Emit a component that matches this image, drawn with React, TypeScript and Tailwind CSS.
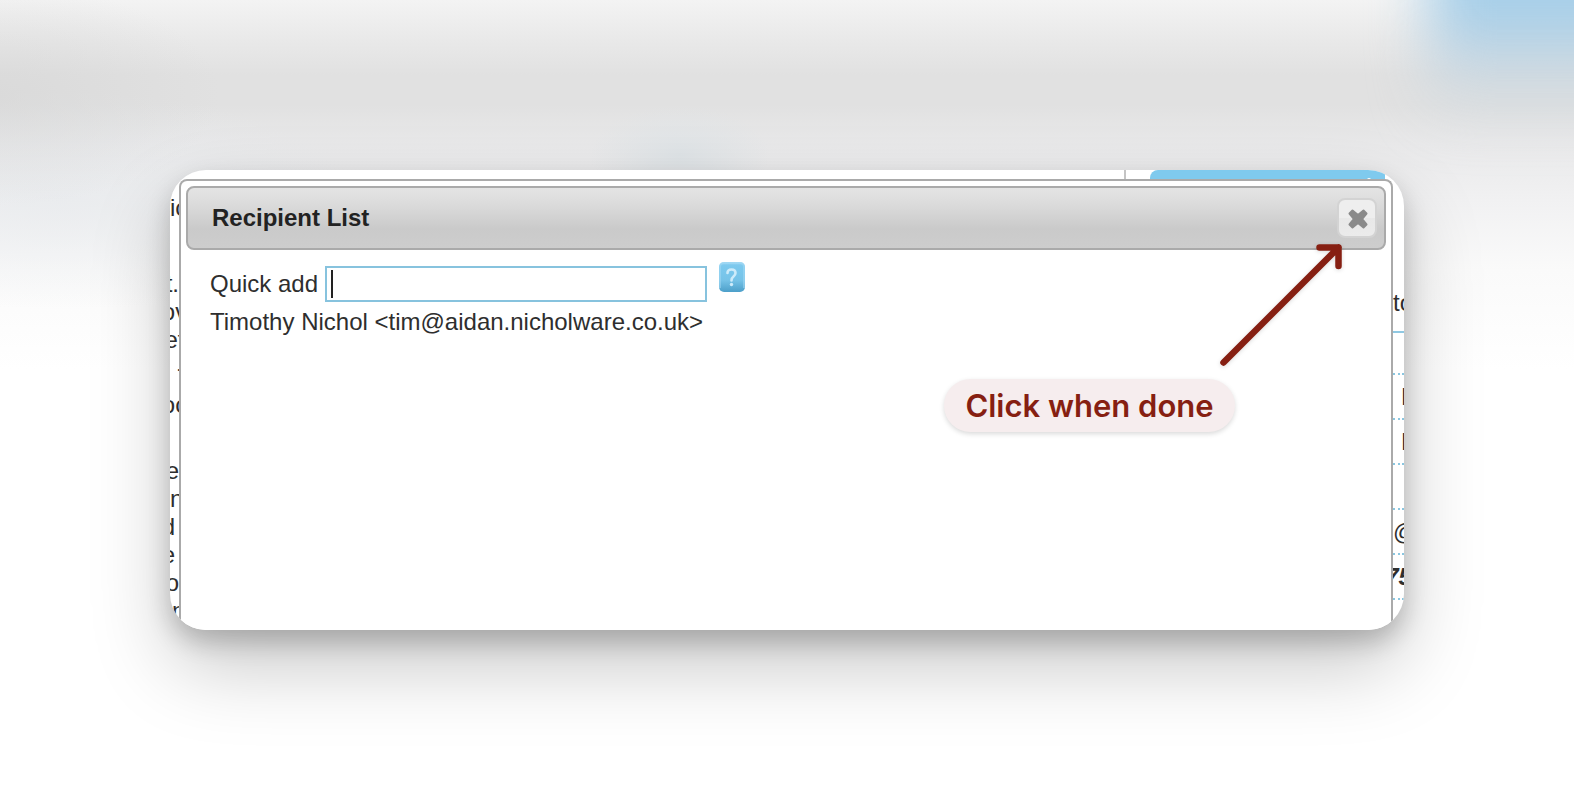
import { useState } from 'react'
import clsx from 'clsx'

type Line = { text: string; gap: string; align: string; bold?: boolean }

// slivers of the page that stay visible left of the dialog
const leftLines: Line[] = [
  { text: 'ic', gap: 'mt-[15px]', align: 'justify-start' },
  { text: 't.', gap: 'mt-12', align: 'justify-end' },
  { text: 'ov', gap: 'mt-0', align: 'justify-center' },
  { text: 'et', gap: 'mt-0', align: 'justify-center' },
  { text: '-', gap: 'mt-0', align: 'justify-start pl-[7px]' },
  { text: 'oc', gap: 'mt-[9px]', align: 'justify-center' },
  { text: 'e', gap: 'mt-[38px]', align: 'justify-end' },
  { text: 'n', gap: 'mt-0', align: 'justify-start' },
  { text: 'd', gap: 'mt-0', align: 'justify-end pr-1' },
  { text: 'e', gap: 'mt-0', align: 'justify-end pr-1' },
  { text: 'o', gap: 'mt-0', align: 'justify-end' },
  { text: 'n', gap: 'mt-0', align: 'justify-start pl-0.5' },
]

const rightRows: Line[] = [
  { text: '', gap: 'h-[42px]', align: 'justify-start' },
  { text: 'H', gap: 'h-[45px]', align: 'justify-start pl-2' },
  { text: 'H', gap: 'h-[45px]', align: 'justify-start pl-2' },
  { text: '', gap: 'h-[45px]', align: 'justify-start' },
  { text: '@', gap: 'h-[45px]', align: 'justify-start' },
  { text: '75', gap: 'h-[45px]', align: 'justify-center', bold: true },
]

const LeftSliver = () => (
  <div className="w-[9px] shrink-0 overflow-hidden" aria-hidden="true">
    {leftLines.map((line, i) => (
      <div key={i} className={clsx('flex leading-7 whitespace-nowrap', line.gap, line.align)}>
        {line.text}
      </div>
    ))}
  </div>
)

const RightSliver = () => (
  <div className="w-[11px] shrink-0 overflow-hidden" aria-hidden="true">
    <div className="mt-[110px] h-11 leading-7 whitespace-nowrap border-b-2 border-[#8fc8e2]">to</div>
    {rightRows.map((row, i) => (
      <div
        key={i}
        className={clsx(
          'flex items-center leading-7 whitespace-nowrap border-b-2 border-dotted border-[#8ac6e0]',
          row.gap,
          row.align,
          row.bold && 'font-bold italic'
        )}
      >
        {row.text}
      </div>
    ))}
  </div>
)

const HelpIcon = () => (
  <svg width="26" height="30" viewBox="0 0 26 30" aria-hidden="true">
    <defs>
      <linearGradient id="help" x1="0" y1="0" x2="0" y2="1">
        <stop offset="0" stopColor="#9bd5f2" />
        <stop offset="0.12" stopColor="#7cc9ee" />
        <stop offset="0.6" stopColor="#76c3e8" />
        <stop offset="1" stopColor="#4c9fc9" />
      </linearGradient>
    </defs>
    <rect width="26" height="30" rx="5" fill="url(#help)" />
    <path d="M1 26 V5 Q1 1 5 1 H21 Q25 1 25 5 V26" fill="none" stroke="#a8dcf5" strokeOpacity="0.5" strokeWidth="2" />
    <path d="M8.5 11 Q8.5 7.5 12.5 7.5 Q16.5 7.5 16.5 11 Q16.5 13 14.5 14.5 Q12.5 16 12.5 18.5" fill="none" stroke="#cdebfa" strokeWidth="2.6" strokeLinecap="round" />
    <circle cx="12.5" cy="22.5" r="1.7" fill="#cdebfa" />
  </svg>
)

const CloseIcon = () => (
  <svg width="22" height="22" viewBox="0 0 22 22" aria-hidden="true">
    <path
      d="M6.5 3.5 L12 8 L17.5 3.5 L20.5 6.5 L16 12 L20.5 17.5 L17.5 20.5 L12 16 L6.5 20.5 L3.5 17.5 L8 12 L3.5 6.5 Z"
      fill="#8a8a8a"
      stroke="#8a8a8a"
      strokeWidth="2"
      strokeLinejoin="round"
    />
  </svg>
)

const Arrow = () => (
  <svg
    className="absolute right-[60px] top-[72px] drop-shadow-sm pointer-events-none"
    width="128"
    height="128"
    viewBox="0 0 128 128"
    fill="none"
    stroke="#861f12"
    strokeWidth="6.5"
    strokeLinecap="round"
    strokeLinejoin="round"
    aria-hidden="true"
  >
    <path d="M7.5 120.5 L122.5 5.5 M103.5 5.5 H122.5 V24" />
  </svg>
)

const Dialog = () => {
  const [query, setQuery] = useState('')

  return (
    <section className="flex-1 min-w-0 bg-white border-2 border-b-0 border-[#aaaaaa] rounded-t-lg p-[5px]">
      <header className="flex items-center justify-between h-16 pl-6 pr-[7px] border-2 border-[#aaaaaa] rounded-lg bg-[linear-gradient(#e4e4e4,#dadada_30%,#cacaca_68%,#cdcdcd)]">
        <h1 className="font-bold text-[#222222]">Recipient List</h1>
        <button
          type="button"
          aria-label="Close"
          className="flex items-center justify-center size-10 rounded-lg border-2 border-[#d3d3d3] bg-[linear-gradient(#eeeeee_50%,#e8e8e8_50%,#ebebeb)]"
        >
          <CloseIcon />
        </button>
      </header>

      <div className="px-6 pt-4">
        <div className="flex items-center h-9">
          <label htmlFor="quick-add" className="whitespace-nowrap">Quick add</label>
          <div className="relative ml-[7px]">
            <input
              id="quick-add"
              type="text"
              value={query}
              onChange={(e) => setQuery(e.target.value)}
              className="block w-[382px] h-9 px-1 border-2 border-[#87c3de] bg-white outline-none caret-transparent"
            />
            <span className="absolute left-1.5 top-1 w-0.5 h-7 bg-[#222222]" />
          </div>
          <button type="button" aria-label="Help" className="ml-3 -mt-3.5">
            <HelpIcon />
          </button>
        </div>
        <p className="mt-1.5 leading-7">Timothy Nichol &lt;tim@aidan.nicholware.co.uk&gt;</p>
      </div>
    </section>
  )
}

export default function App() {
  return (
    <main className="relative min-h-screen flex items-center px-[170px] overflow-hidden font-['Liberation_Sans',Arial,sans-serif] text-2xl text-[#2e2e2e] bg-[radial-gradient(ellipse_220px_110px_at_0_95px,#d4d4d488,#d4d4d400),radial-gradient(ellipse_90px_50px_at_680px_155px,#dfe4e7,#dfe4e700),radial-gradient(ellipse_300px_110px_at_60px_200px,#e6e9ecaa,#e6e9ec00),linear-gradient(#f3f3f3_0,#e9e9e9_40px,#e1e1e1_75px,#e1e1e1_105px,#e9e9ea_145px,#f1f1f2_200px,#fafafa_270px,#ffffff_370px)]">
      {/* soft colour glow in the corner */}
      <div className="absolute -top-24 -right-24 w-[240px] h-[220px] bg-[linear-gradient(#a4cfea_45%,#b4d0e4_60%,#c8d6dfaa_75%,#d8dddf00)] blur-[28px]" />

      <div className="relative flex flex-col w-full min-h-[460px] rounded-[36px] bg-white shadow-[0_12px_24px_#00000033,0_36px_80px_#00000038]">
        <div className="flex flex-col flex-1 rounded-[36px] overflow-hidden">
          <div className="flex justify-end h-[9px] pr-[19px] overflow-hidden">
            <div className="w-[26px] border-l-2 border-[#c4c4c4]" />
            <div className="flex justify-end w-[235px] h-6 pr-3.5 pt-2 rounded-tl-lg bg-[#7fcaee]">
              <span className="w-1 h-1 rounded-full bg-white" />
            </div>
          </div>
          <div className="flex flex-1">
            <LeftSliver />
            <Dialog />
            <RightSliver />
          </div>
        </div>

        <Arrow />
        <div className="absolute right-[169px] top-[209px] flex items-center justify-center w-[291px] h-[53px] rounded-full bg-[#f6edee] shadow-[0_2px_5px_#00000026] font-['Inter',sans-serif] font-semibold text-[31px] text-[#861f12] whitespace-nowrap">
          Click when done
        </div>
      </div>
    </main>
  )
}
